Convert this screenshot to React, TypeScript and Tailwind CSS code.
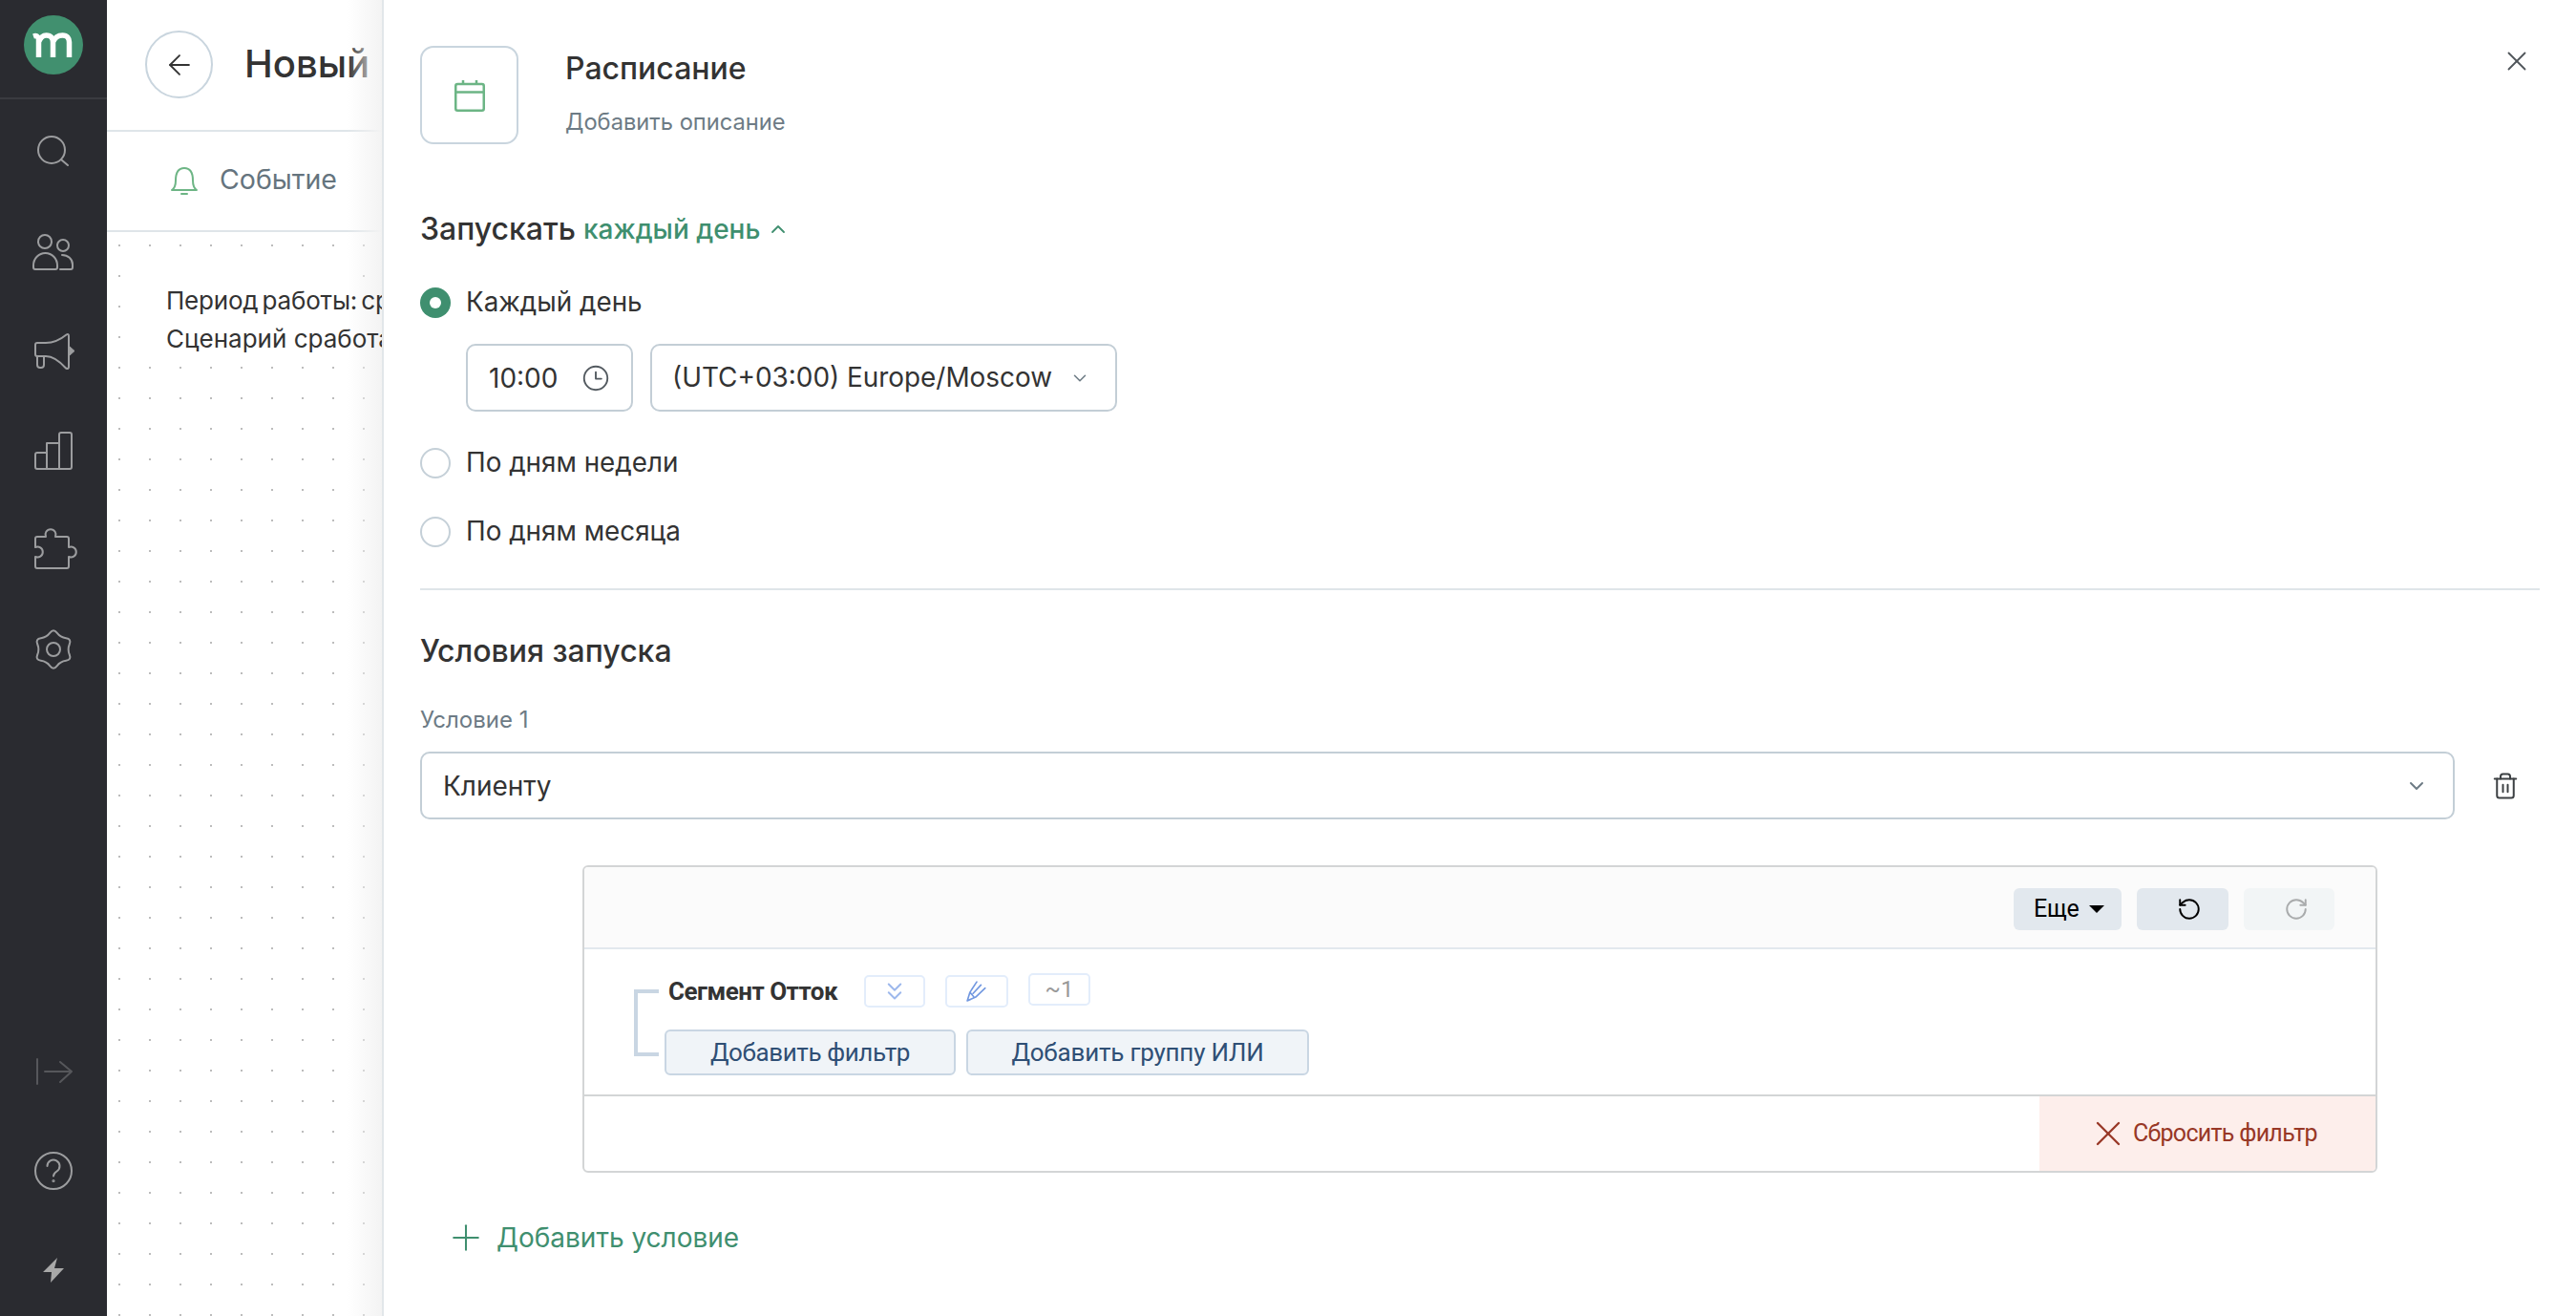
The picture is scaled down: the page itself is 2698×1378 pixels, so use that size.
import React from 'react';
import { ArrowLeft, ChevronDown, ChevronUp, ChevronsDown, Plus, RotateCcw, RotateCw, Trash2, X } from 'lucide-react';

const Icon = ({ children }: { children: React.ReactNode }) => (
  <svg width="60" height="60" viewBox="0 0 60 60" fill="none" stroke="currentColor" strokeWidth="2" strokeLinecap="round" strokeLinejoin="round">
    {children}
  </svg>
);

// wavy six lobed outline of the settings gear
const gearPath = (() => {
  const pts = Array.from({ length: 12 }, (_, i) => {
    const a = ((i * 30 - 90) * Math.PI) / 180;
    const r = i % 2 === 0 ? 22 : 14.5;
    return [30 + r * Math.cos(a), 30 + r * Math.sin(a)];
  });
  const mid = (a: number[], b: number[]) => [(a[0] + b[0]) / 2, (a[1] + b[1]) / 2];
  const start = mid(pts[11], pts[0]);
  let d = `M${start[0].toFixed(2)} ${start[1].toFixed(2)}`;
  pts.forEach((p, i) => {
    const m = mid(p, pts[(i + 1) % 12]);
    d += ` Q${p[0].toFixed(2)} ${p[1].toFixed(2)} ${m[0].toFixed(2)} ${m[1].toFixed(2)}`;
  });
  return d + 'Z';
})();

const topItems = [
  <>
    <circle cx="28" cy="27" r="14" />
    <path d="M38.5 37.5 45 43" />
  </>,
  <>
    <circle cx="21" cy="19" r="7" />
    <path d="M9 44a12.5 13 0 0 1 25 0v2a2 2 0 0 1-2 2H11a2 2 0 0 1-2-2z" />
    <circle cx="40" cy="23" r="6" />
    <path d="M39 33c6 0 11 4 11 10v3a2 2 0 0 1-2 2H37" />
  </>,
  <>
    <path d="M13 21h9c10 0 16-4 21.500-8.500Q46 11 46 14v32q0 3-3 1.500C38 42 30 35 22 35h-9q-2 0-2-2V23q0-2 2-2z" />
    <path d="M13 35v9a3 3 0 0 0 3 3h1a3 3 0 0 0 3-3v-9" />
    <path d="M47 25l5 4.500-5 4.500z" fill="currentColor" strokeWidth="1" />
  </>,
  <>
    <path d="M13 32h10V22h13V13a2 2 0 0 1 2-2h9a2 2 0 0 1 2 2v34a2 2 0 0 1-2 2H13a2 2 0 0 1-2-2V34a2 2 0 0 1 2-2z" />
    <path d="M23 32v17M36 22v27" />
  </>,
  <path d="M13 16h9a5.500 5.500 0 1 1 10 0h12a2 2 0 0 1 2 2v9a5.500 5.500 0 1 1 0 10v10a2 2 0 0 1-2 2H13a2 2 0 0 1-2-2V37a5.500 5.500 0 1 0 0-10v-9a2 2 0 0 1 2-2z" />,
  <>
    <path d={gearPath} />
    <circle cx="30" cy="30" r="7" />
  </>,
];

const Sidebar = () => (
  <aside className="flex h-full w-[112px] shrink-0 flex-col bg-[#2a2b30] text-[#9c9d9f]">
    <div className="flex h-[104px] shrink-0 items-start justify-center border-b-2 border-[#3a3b40] pt-[16px]">
      <svg width="62" height="62" viewBox="0 0 62 62" fill="none">
        <circle cx="31" cy="31" r="31" fill="#41906f" />
        <path d="M10 22c3-1 5 0 5.500 3v19M15.500 28c2-5 5-7 8-7 5 0 7 3 7 7v16M30.500 28c2-5 6-7 10-7 5 0 7 3 7 7v16" stroke="#fff" strokeWidth="5.500" />
      </svg>
    </div>
    <nav className="flex flex-col items-center gap-[44px] pt-[26px]">
      {topItems.map((item, i) => (
        <div key={i} className="h-[60px] w-[60px]">
          <Icon>{item}</Icon>
        </div>
      ))}
    </nav>
    <div className="mt-auto flex flex-col items-center gap-[44px] pb-[18px]">
      <div className="h-[60px] w-[60px] text-[#56575b]">
        <Icon>
          <path d="M13 17v26M21 30h28M37 20l12 10-12 11" />
        </Icon>
      </div>
      <div className="h-[60px] w-[60px]">
        <Icon>
          <circle cx="30" cy="30" r="19" />
          <path d="M23.500 25a6.500 6.500 0 1 1 10 5.500c-2 1.300-3.500 2.500-3.500 5" />
          <circle cx="30" cy="40.500" r="0.600" />
        </Icon>
      </div>
      <div className="h-[60px] w-[60px] text-[#a8a8a8]">
        <svg width="60" height="60" viewBox="0 0 60 60" fill="currentColor">
          <path d="M34 17 19 32h9l-1 11 14-15h-10z" />
        </svg>
      </div>
    </div>
  </aside>
);

const Canvas = () => (
  <main className="relative h-full w-[288px] shrink-0 overflow-hidden bg-white font-['Inter',sans-serif]">
    <header className="flex h-[138px] items-start gap-[33px] border-b-2 border-[#dfe5e9] pl-[40px] pt-[32px]">
      <button className="flex h-[71px] w-[71px] shrink-0 items-center justify-center rounded-full border-2 border-[#c9d5de] text-[#333]">
        <ArrowLeft size={34} strokeWidth={1.3} />
      </button>
      <h1 className="whitespace-nowrap pt-[10px] text-[40px] leading-[50px] font-medium text-[#333]">Новый</h1>
    </header>
    <div className="flex h-[105px] items-center gap-[22px] border-b-2 border-[#dfe5e9] pb-[3px] pl-[66px]">
      <svg width="30" height="32" viewBox="0 0 30 32" fill="none" stroke="#6db585" strokeWidth="2" strokeLinejoin="round" strokeLinecap="round">
        <path d="M2 27c3-2 4-5 4-10 0-8 3-13 9-13s9 5 9 13c0 5 1 8 4 10z" />
        <path d="M12 31h6" />
      </svg>
      <span className="text-[28.5px] text-[#65747e]">Событие</span>
    </div>
    <div className="h-full bg-[radial-gradient(circle,#bcbcbc_1px,transparent_1.500px)] bg-[size:32px_32px] bg-[position:-3px_-2px] pt-[27px]">
      {/* the text runs on past the white box, under the open panel */}
      <div className="relative z-10 ml-[28px] w-[226px] bg-white pl-[34px] pt-[25px] text-[26px] leading-[40px] text-[#333] whitespace-nowrap">
        <p className="tracking-[-0.2px] [word-spacing:-3px]">Период работы: ср</p>
        <p>Сценарий сработает</p>
      </div>
    </div>
    <div className="absolute inset-y-0 right-0 w-[36px] bg-gradient-to-r from-white/0 to-[#f3f3f3]" />
  </main>
);

const Radio = ({ checked, label }: { checked?: boolean; label: string }) => (
  <label className="flex h-[40px] items-center gap-[16px] pt-[1px] text-[27.8px] text-[#333]">
    {checked ? (
      <span className="flex h-[32px] w-[32px] items-center justify-center rounded-full bg-[#3f8f6f]">
        <span className="h-[12px] w-[12px] rounded-full bg-white" />
      </span>
    ) : (
      <span className="h-[32px] w-[32px] rounded-full border-2 border-[#c5d0d8]" />
    )}
    {label}
  </label>
);

const SegmentFilter = () => (
  <div className="ml-[170px] mt-[48px] h-[322px] w-[1880px] overflow-hidden rounded-[6px] border-2 border-[#d3d5d6] font-['Roboto',sans-serif]">
    <div className="flex h-[86px] items-start justify-end gap-[16px] border-b-2 border-[#e2e8ee] bg-[#fbfbfb] pr-[43px] pt-[22px]">
      <button className="flex h-[44px] w-[113px] items-center gap-[11px] rounded-[6px] bg-[#e2e8ee] pl-[21px] text-[25px] tracking-[-0.3px] text-black">
        Еще
        <span className="h-0 w-0 border-x-[8px] border-t-[8px] border-x-transparent border-t-black" />
      </button>
      <button className="flex h-[44px] w-[96px] items-center justify-center rounded-[6px] bg-[#e2e8ee] pl-[14px] text-black">
        <RotateCcw size={26} strokeWidth={1.8} />
      </button>
      <button className="flex h-[44px] w-[95px] items-center justify-center rounded-[6px] bg-[#f2f5f6] pl-[14px] text-[#a9abac]">
        <RotateCw size={26} strokeWidth={1.8} />
      </button>
    </div>
    <div className="flex h-[154px] border-b-2 border-[#d3d5d6]">
      <div className="ml-[52px] mt-[42px] h-[70px] w-[26px] border-y-4 border-l-4 border-[#c9d6e3]" />
      <div className="ml-[6px] mt-[25px] flex flex-col">
        <div className="flex h-[36px] items-start">
          <span className="ml-[4px] mt-[2px] w-[205px] text-[26px] leading-[34px] font-bold tracking-[-0.5px] text-[#333]">Сегмент Отток</span>
          <span className="mt-[2px] flex h-[34px] w-[64px] items-center justify-center rounded-[5px] border-2 border-[#e3edfb] text-[#9db8ec]">
            <ChevronsDown size={30} strokeWidth={1.6} />
          </span>
          <span className="ml-[21px] mt-[2px] flex h-[34px] w-[66px] items-center justify-center rounded-[5px] border-2 border-[#e3edfb]">
            <svg width="22" height="22" viewBox="0 0 20 20" fill="none" stroke="#7298e0" strokeWidth="1.500" strokeLinecap="round" strokeLinejoin="round">
              <path d="M1 19 3.500 11 10 1M1 19l8-3.500L18 7M3.500 11 7 15M6.500 12 14 4" />
            </svg>
          </span>
          <span className="ml-[21px] flex h-[34px] w-[65px] items-center justify-center rounded-[5px] border-2 border-[#e3edfb] text-[24px] leading-none text-[#999]">~1</span>
        </div>
        <div className="mt-[23px] flex gap-[11px]">
          <button className="h-[48px] w-[305px] rounded-[6px] border-2 border-[#c9d6e3] bg-[#f0f4f8] text-[26px] leading-none tracking-[-0.4px] text-[#2f4f75]">Добавить фильтр</button>
          <button className="h-[48px] w-[359px] rounded-[6px] border-2 border-[#c9d6e3] bg-[#f0f4f8] text-[26px] leading-none tracking-[-0.2px] text-[#2f4f75]">Добавить группу ИЛИ</button>
        </div>
      </div>
    </div>
    <div className="flex h-[78px] justify-end">
      <button className="flex w-[352px] items-center gap-[4px] bg-[#fdeeeb] pl-[50px] text-[25px] tracking-[-0.7px] text-[#983726]">
        <X size={44} strokeWidth={1.3} />
        Сбросить фильтр
      </button>
    </div>
  </div>
);

const SchedulePanel = () => (
  <section className="relative h-full min-w-0 flex-1 border-l-2 border-[#e2e7ea] bg-white pl-[38px] pr-[38px] font-['Inter',sans-serif] text-[#333]">
    <button className="absolute right-[45px] top-[47px] text-[#50555a]">
      <X size={34} strokeWidth={1.3} />
    </button>
    <div className="mt-[48px] flex h-[103px] gap-[49px]">
      <div className="flex h-[103px] w-[103px] items-center justify-center rounded-[14px] border-2 border-[#c9d5de]">
        <svg width="32" height="34" viewBox="0 0 32 34" fill="none" stroke="#6cb585" strokeWidth="2.500" strokeLinejoin="round">
          <rect x="1.250" y="5" width="29.500" height="27.750" rx="2" />
          <path d="M1 13.500h30M9 1v4M23 1v4" />
        </svg>
      </div>
      <div>
        <h2 className="mt-[4px] h-[40px] text-[32px] leading-[40px] font-medium">Расписание</h2>
        <p className="mt-[20px] h-[32px] text-[23.7px] leading-[32px] text-[#6d7b85]">Добавить описание</p>
      </div>
    </div>
    <div className="mt-[69px] flex h-[40px] items-center text-[32px]">
      <span className="font-medium">Запускать</span>
      <span className="ml-[8px] text-[28px] font-medium text-[#3f8f6f]">каждый день</span>
      <ChevronUp className="ml-[7px] text-[#3f8f6f]" size={24} strokeWidth={1.8} />
    </div>
    <div className="mt-[36px]">
      <Radio checked label="Каждый день" />
    </div>
    <div className="ml-[48px] mt-[24px] flex h-[71px] gap-[18px] text-[28px]">
      <div className="flex w-[175px] items-center justify-between rounded-[10px] border-2 border-[#c3ced6] pl-[22px] pr-[23px]">
        10:00
        <svg width="28" height="28" viewBox="0 0 24 24" fill="none" stroke="#52595f" strokeWidth="1.600" strokeLinecap="round" strokeLinejoin="round">
          <circle cx="12" cy="12" r="10.500" />
          <path d="M12 6.500v6h5" />
        </svg>
      </div>
      <div className="flex w-[489px] items-center justify-between rounded-[10px] border-2 border-[#c3ced6] pl-[21px] pr-[26px] text-[27.9px]">
        (UTC+03:00) Europe/Moscow
        <ChevronDown className="text-[#6d7b85]" size={22} strokeWidth={1.7} />
      </div>
    </div>
    <div className="mt-[33px]">
      <Radio label="По дням недели" />
    </div>
    <div className="mt-[32px]">
      <Radio label="По дням месяца" />
    </div>
    <div className="mt-[40px] h-[2px] bg-[#dfe5e9]" />
    <h3 className="mt-[44px] h-[40px] text-[32px] leading-[40px] font-medium">Условия запуска</h3>
    <p className="mt-[36px] h-[32px] text-[24px] leading-[32px] text-[#6d7b85]">Условие 1</p>
    <div className="mt-[17px] flex items-center">
      <div className="flex h-[71px] w-[2131px] items-center justify-between rounded-[10px] border-2 border-[#c3ced6] pl-[22px] pr-[26px] text-[28px]">
        Клиенту
        <ChevronDown className="text-[#6d7b85]" size={24} strokeWidth={2} />
      </div>
      <Trash2 className="ml-[38px] text-[#3c4043]" size={30} strokeWidth={1.6} />
    </div>
    <SegmentFilter />
    <button className="ml-[26px] mt-[48px] flex h-[40px] items-center gap-[10px] text-[28px] text-[#3f8f6f]">
      <Plus size={44} strokeWidth={1.1} />
      Добавить условие
    </button>
  </section>
);

export default function App() {
  return (
    <div className="flex h-screen w-full overflow-hidden bg-white">
      <Sidebar />
      <Canvas />
      <SchedulePanel />
    </div>
  );
}
